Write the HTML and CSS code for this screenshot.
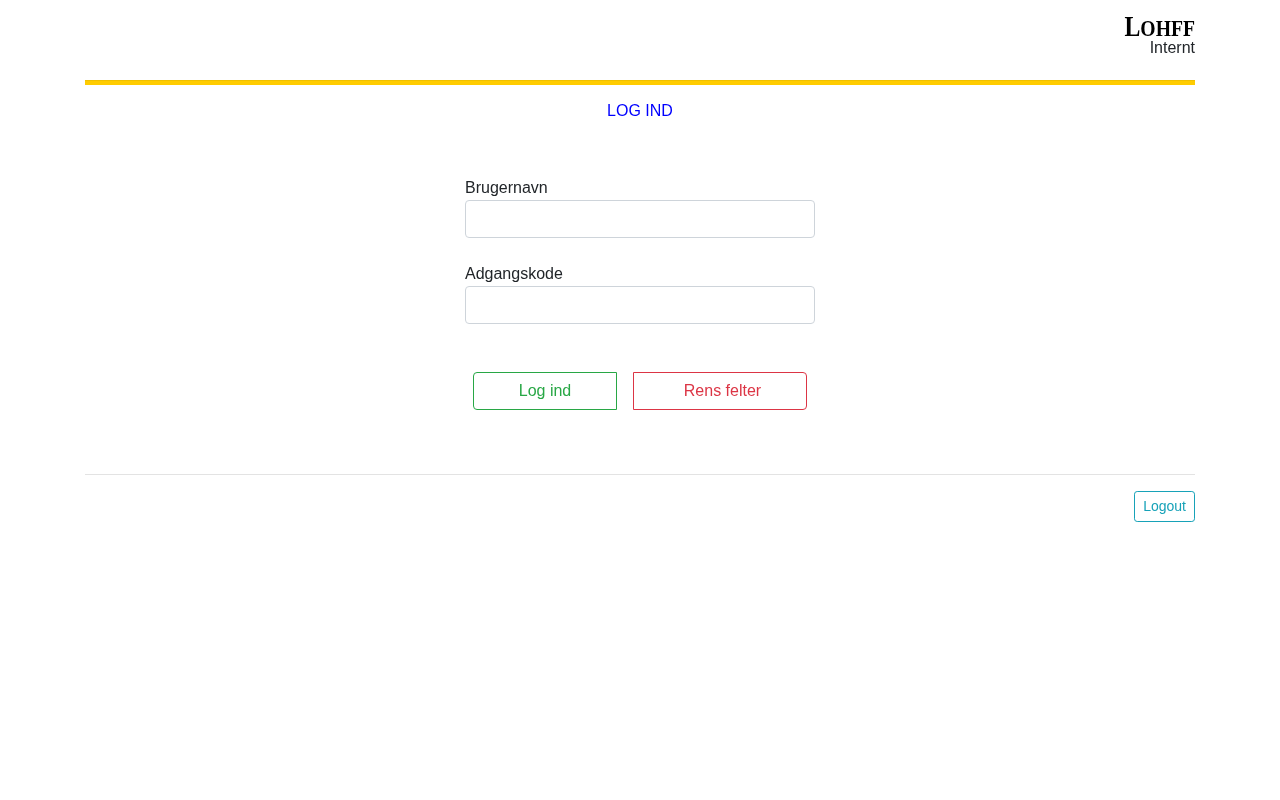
FILE: index.html
```html
<!DOCTYPE html>
<html lang="da">
<head>
<meta charset="utf-8">
<title>Log ind</title>
<link rel="stylesheet" href="styles.css">
</head>
<body>
<div class="container">
  <header class="top">
    <div class="logo"><span class="logo-l">L</span><span class="logo-rest">OHFF</span></div>
    <div class="sub">Internt</div>
  </header>
  <div class="rule"></div>
  <h1 class="title">LOG IND</h1>
  <form class="form">
    <div class="field">
      <label class="label" for="u">Brugernavn</label>
      <input class="input" id="u" type="text">
    </div>
    <div class="field">
      <label class="label" for="p">Adgangskode</label>
      <input class="input" id="p" type="password">
    </div>
    <div class="actions">
      <button class="btn btn-ok" type="button">Log ind</button>
      <button class="btn btn-clear" type="button">Rens felter</button>
    </div>
  </form>
  <hr class="sep">
  <div class="foot"><button class="logout" type="button">Logout</button></div>
</div>
</body>
</html>
```
FILE: styles.css
```css
* { box-sizing: border-box; }
html, body { margin: 0; padding: 0; background: #fff; }
body {
  font-family: "Liberation Sans", Arial, sans-serif;
  font-size: 16px;
  line-height: 24px;
  color: #212529;
}
.container { width: 1110px; margin: 0 auto; will-change: transform; }
.top {
  height: 80px;
  padding-top: 14px;
  display: flex;
  flex-direction: column;
  align-items: flex-end;
}
.logo {
  height: 24px;
  line-height: 24px;
  font-family: "Liberation Serif", "Times New Roman", serif;
  font-weight: 700;
  color: #000;
  white-space: nowrap;
  transform: scaleX(0.82);
  transform-origin: right center;
}
.logo-l { font-size: 29px; }
.logo-rest { font-size: 24px; }
.sub { line-height: 20px; }
.rule { height: 5px; background: #ffcc00; border-top: 1px solid #f0c000; }
.title {
  margin: 15px 0 0;
  font-size: 16px;
  font-weight: 400;
  line-height: 22px;
  color: #0000ff;
  text-align: center;
}
.form { width: 350px; margin: 54px auto 0; }
.field { margin-bottom: 24px; }
.label { display: block; line-height: 24px; height: 24px; }
.input {
  display: block;
  width: 100%;
  height: 38px;
  padding: 6px 12px;
  font: inherit;
  border: 1px solid #ced4da;
  border-radius: 4px;
  background: #fff;
}
.actions { display: flex; justify-content: center; gap: 16px; margin-top: 48px; }
.btn {
  height: 38px;
  padding: 0;
  font: inherit;
  background: #fff;
  border: 1px solid;
}
.btn-ok { width: 144px; color: #28a745; border-color: #28a745; border-radius: 4px 0 0 4px; }
.btn-clear { width: 174px; padding-left: 5px; color: #dc3545; border-color: #dc3545; border-radius: 0 4px 4px 0; }
.sep { margin: 64px 0 16px; border: 0; border-top: 1px solid #e3e3e3; }
.foot { display: flex; justify-content: flex-end; }
.logout {
  height: 31px;
  padding: 4px 8px;
  font: inherit;
  font-size: 14px;
  line-height: 21px;
  color: #17a2b8;
  background: #fff;
  border: 1px solid #17a2b8;
  border-radius: 3.2px;
}
```
